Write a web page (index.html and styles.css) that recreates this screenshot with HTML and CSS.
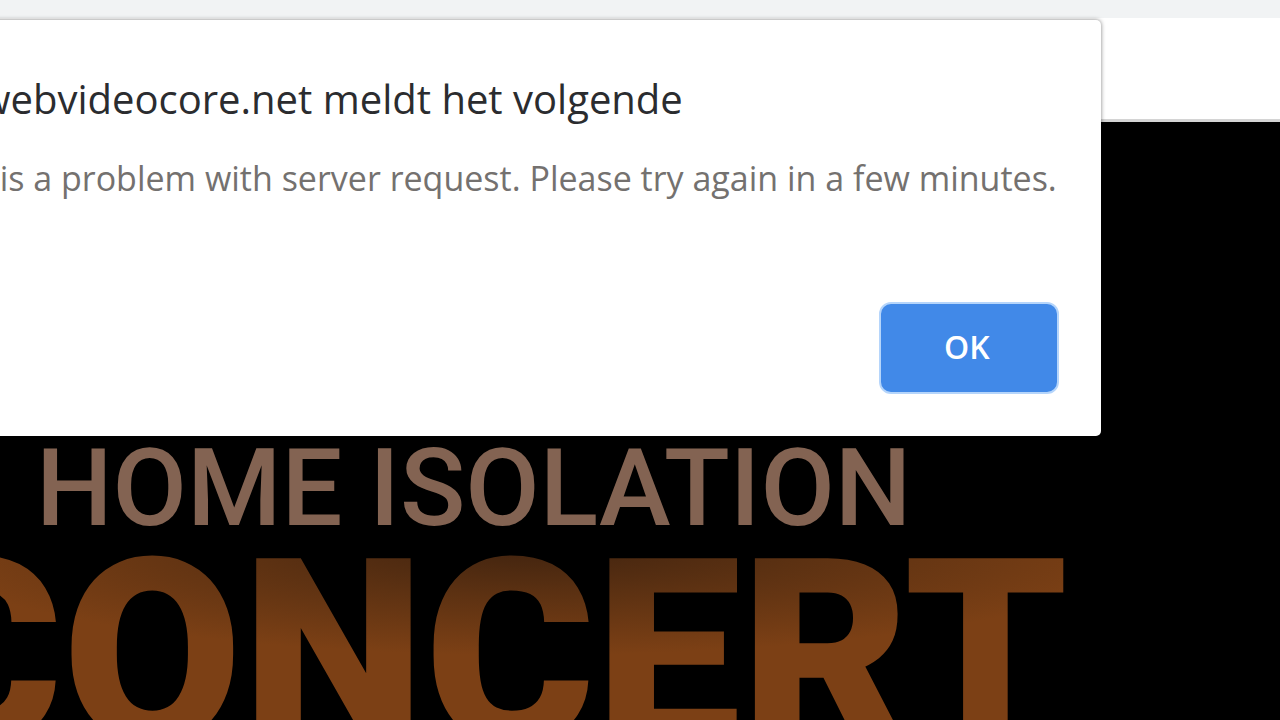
FILE: index.html
```html
<!DOCTYPE html>
<html lang="nl">
<head>
<meta charset="utf-8">
<meta name="viewport" content="width=device-width, initial-scale=1">
<title>Home Isolation Concert</title>
<link rel="stylesheet" href="styles.css">
</head>
<body>
<div class="browser-bar"></div>
<header class="page-header"></header>
<main class="poster">
  <h1 class="poster-title">
    <span class="poster-kicker">HOME ISOLATION</span>
    <span class="poster-word">CONCERT</span>
  </h1>
</main>
<section class="dialog" role="alertdialog" aria-labelledby="dialog-title" aria-describedby="dialog-message">
  <h2 class="dialog-title" id="dialog-title">webvideocore.net meldt het volgende</h2>
  <p class="dialog-message" id="dialog-message">There is a problem with server request. Please try again in a few minutes.</p>
  <div class="dialog-actions"><button class="ok-button" type="button">OK</button></div>
</section>
</body>
</html>
```

FILE: styles.css
```css
* {
  box-sizing: border-box;
}

body {
  margin: 0;
  height: 100vh;
  display: flex;
  flex-direction: column;
  overflow: hidden;
  background: #fff;
  font-family: "Open Sans", "Noto Sans", sans-serif;
}

.browser-bar {
  flex: none;
  height: 18px;
  background: #f1f3f4;
}

.page-header {
  flex: none;
  height: 104px;
  background: #fff;
  border-bottom: 3px solid #d4d4d4;
}

.poster {
  flex: 1;
  padding-top: 319px;
  background: #000;
  overflow: hidden;
}

.poster-title {
  margin: 0;
  font-family: Roboto, "Liberation Sans", sans-serif;
  white-space: nowrap;
}

.poster-kicker {
  display: block;
  padding-left: 36px;
  color: #836352;
  font-size: 108px;
  font-weight: 500;
  line-height: 94px;
}

.poster-word {
  display: block;
  width: max-content;
  margin-left: -108px;
  background: radial-gradient(ellipse 620px 110px at 640px 10px, #40230f 0%, #5c3112 45%, #7c4015 100%);
  background-clip: text;
  -webkit-background-clip: text;
  color: transparent;
  font-size: 260px;
  font-weight: 900;
  line-height: 238px;
}

.dialog {
  position: absolute;
  top: 20px;
  right: 14%;
  left: -240px;
  padding: 52px 42px 42px;
  background: #fff;
  border-radius: 5px;
  box-shadow: 0 0 4px rgba(0, 0, 0, 0.5);
  text-align: right;
  white-space: nowrap;
}

.dialog-title {
  margin: 0 376px 26px 0;
  color: #2b2c2f;
  font-size: 40px;
  font-weight: 400;
  line-height: 54px;
}

.dialog-message {
  margin: 0 2px 98px 0;
  color: #74716f;
  font-size: 34px;
  font-weight: 400;
  line-height: 52px;
}

.ok-button {
  width: 180px;
  height: 92px;
  padding: 0 4px 4px 0;
  border: 2px solid #b5d5fb;
  border-radius: 12px;
  background: #4189e8;
  color: #fff;
  font: 600 32px "Open Sans", sans-serif;
}
```
